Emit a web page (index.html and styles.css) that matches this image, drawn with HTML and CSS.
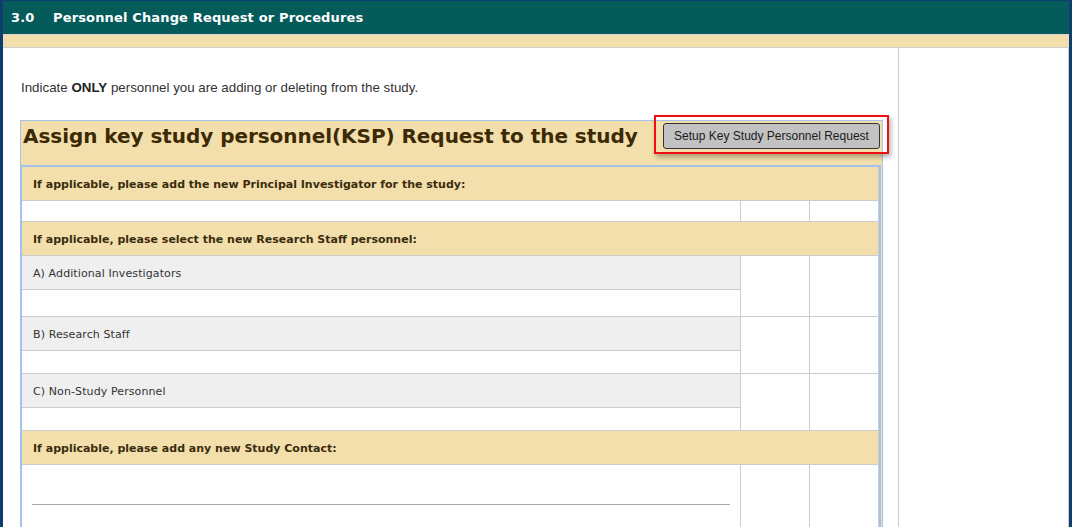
FILE: index.html
```html
<!DOCTYPE html>
<html lang="en">
<head>
    <meta charset="UTF-8">
    <title>Personnel Change Request or Procedures</title>
    <link rel="stylesheet" href="styles.css">
</head>
<body>
    <div class="frame">
        <div class="section-head">
            <span class="section-num">3.0</span>
            <span class="section-title">Personnel Change Request or Procedures</span>
        </div>
        <div class="section-strip"></div>
        <div class="section-body">
            <div class="main">
                <p class="intro">Indicate <b>ONLY</b> personnel you are adding or deleting from the study.</p>

                <div class="ksp-box">
                    <div class="ksp-head">
                        <h1>Assign key study personnel(KSP) Request to the study</h1>
                        <span class="highlight">
                            <button type="button" class="setup-btn">Setup Key Study Personnel Request</button>
                        </span>
                    </div>

                    <table class="ksp-table">
                        <colgroup>
                            <col class="col-name">
                            <col class="col-a">
                            <col class="col-b">
                        </colgroup>
                        <tr class="group-row">
                            <td colspan="3">If applicable, please add the new Principal Investigator for the study:</td>
                        </tr>
                        <tr class="blank-row">
                            <td></td><td></td><td></td>
                        </tr>
                        <tr class="group-row">
                            <td colspan="3">If applicable, please select the new Research Staff personnel:</td>
                        </tr>
                        <tr class="label-row">
                            <td class="label-cell">A) Additional Investigators</td>
                            <td rowspan="2"></td><td rowspan="2"></td>
                        </tr>
                        <tr class="entry-row tall">
                            <td></td>
                        </tr>
                        <tr class="label-row">
                            <td class="label-cell">B) Research Staff</td>
                            <td rowspan="2"></td><td rowspan="2"></td>
                        </tr>
                        <tr class="entry-row">
                            <td></td>
                        </tr>
                        <tr class="label-row">
                            <td class="label-cell">C) Non-Study Personnel</td>
                            <td rowspan="2"></td><td rowspan="2"></td>
                        </tr>
                        <tr class="entry-row">
                            <td></td>
                        </tr>
                        <tr class="group-row">
                            <td colspan="3">If applicable, please add any new Study Contact:</td>
                        </tr>
                        <tr class="contact-row">
                            <td><hr class="contact-line"></td><td></td><td></td>
                        </tr>
                    </table>
                </div>
            </div>
            <div class="side"></div>
        </div>
    </div>
</body>
</html>
```

FILE: styles.css
```css
html, body {
    margin: 0;
    padding: 0;
    background: #fff;
}
body {
    width: 1072px;
    height: 527px;
    overflow: hidden;
}
.frame {
    box-sizing: border-box;
    width: 1072px;
    min-height: 527px;
    border-top: 1px solid #0f3d70;
    border-left: 3px solid #0f3d70;
    border-right: 3px solid #0f3d70;
}
.section-head {
    height: 33px;
    background: #055a5a;
    color: #fff;
    font-family: "DejaVu Sans", Verdana, sans-serif;
    font-weight: bold;
    font-size: 13px;
    letter-spacing: 0.15px;
    display: flex;
    align-items: center;
    padding-left: 8px;
}
.section-num {
    width: 42px;
}
.section-strip {
    height: 12px;
    background: #f2dfab;
    border-top: 1px solid #d8d8d8;
    border-bottom: 1px solid #cfcfcf;
}
.section-body {
    display: flex;
    min-height: 480px;
}
.main {
    width: 878px;
    padding-left: 17px;
    border-right: 1px solid #cccccc;
}
.side {
    flex: 1;
    border-right: 1px solid #cccccc;
}
.intro {
    margin: 32px 0 0 1px;
    font-family: "Liberation Sans", Arial, sans-serif;
    font-size: 13.33px;
    line-height: 15px;
    color: #333;
}
.intro b {
    color: #222;
}

/* key study personnel box */
.ksp-box {
    margin-top: 25px;
    width: 861px;
    border: 1px solid #a6c1ec;
    border-bottom: none;
    background: #f2dfab;
}
.ksp-head {
    height: 30px;
    padding-bottom: 14px;
    display: flex;
    align-items: center;
}
.ksp-head h1 {
    margin: 0 0 0 2px;
    font-family: "DejaVu Sans", Verdana, sans-serif;
    font-size: 20px;
    font-weight: bold;
    letter-spacing: -0.05px;
    color: #3b2a05;
    white-space: nowrap;
}
.highlight {
    position: relative;
    margin-left: auto;
    margin-right: 2px;
    display: flex;
}
.highlight::after {
    content: "";
    position: absolute;
    top: -8px;
    bottom: -5px;
    left: -9px;
    right: -9px;
    border: 2px solid #ee1111;
    box-shadow: 2px 3px 5px rgba(0, 0, 0, 0.3);
    pointer-events: none;
}
.setup-btn {
    width: 217px;
    height: 26px;
    padding: 0;
    background: #c2c2c2;
    border: 1px solid #333;
    border-radius: 3px;
    font-family: "Liberation Sans", Arial, sans-serif;
    font-size: 12px;
    color: #1a1a1a;
    cursor: pointer;
}

/* personnel table */
.ksp-table {
    width: 861px;
    margin-left: -1px;
    border: 2px solid #a6c1ec;
    border-bottom: none;
    border-collapse: separate;
    border-spacing: 0;
    table-layout: fixed;
    background: #fff;
}
.col-name { width: 719px; }
.col-a { width: 69px; }
.ksp-table td {
    padding: 0;
    border-right: 1px solid #cccccc;
    border-bottom: 1px solid #cccccc;
    vertical-align: middle;
}
.group-row td {
    height: 32px;
    padding: 1px 0 0 11px;
    background: #f2dfab;
    font-family: "DejaVu Sans", Verdana, sans-serif;
    font-size: 11px;
    font-weight: bold;
    color: #3a2c0e;
}
.blank-row td {
    height: 20px;
}
.label-row td {
    height: 33px;
}
.label-row td.label-cell {
    height: 32px;
    padding: 1px 0 0 11px;
    background: #efefef;
    font-family: "DejaVu Sans", Verdana, sans-serif;
    font-size: 11px;
    letter-spacing: 0.1px;
    color: #333;
}
.entry-row td {
    height: 22px;
}
.entry-row.tall td {
    height: 26px;
}
.contact-row td {
    height: 80px;
    vertical-align: top;
}
.contact-line {
    margin: 39px 10px 0 10px;
    border: none;
    border-top: 1px solid #aaa;
    height: 0;
}
```
